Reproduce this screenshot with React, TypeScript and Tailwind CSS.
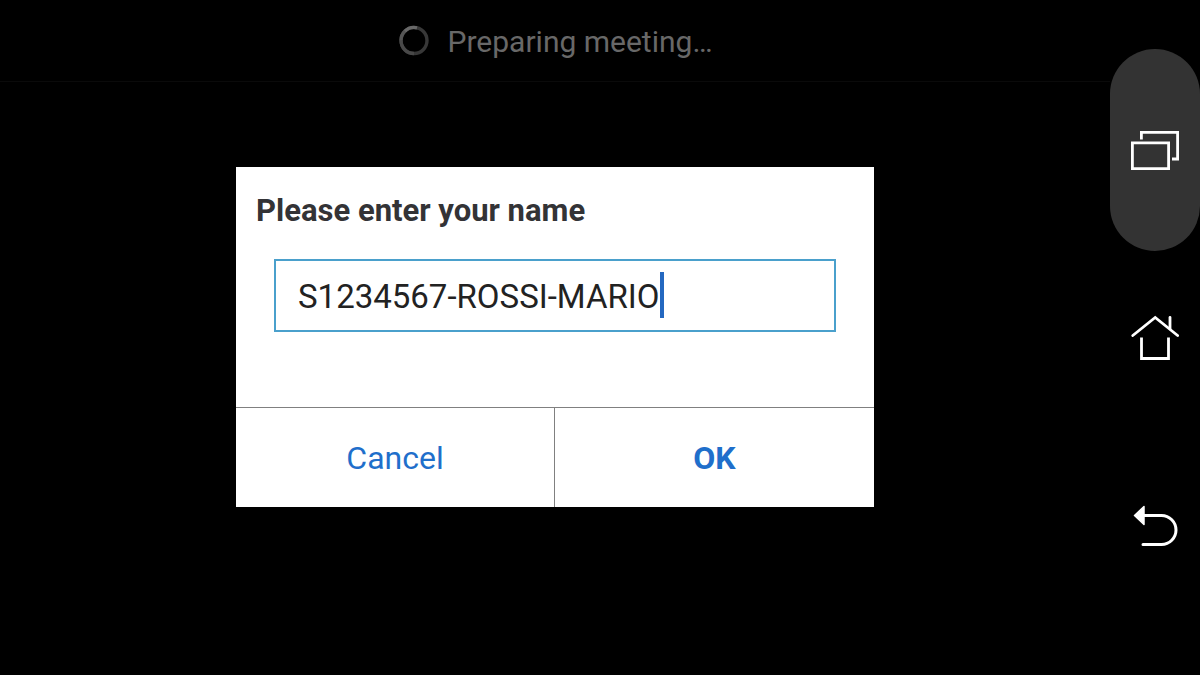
import { useState } from 'react'

function Spinner() {
  return (
    <svg className="h-8 w-8" viewBox="0 0 32 32" fill="none" strokeWidth="3.4">
      <circle cx="16" cy="15.5" r="13" stroke="#383838" />
      <path d="M3 15.5A13 13 0 0 0 16 28.5" stroke="#484848" />
      <path d="M3 15.5A13 13 0 0 1 6.8 6.3" stroke="#555555" />
      <path d="M6.8 6.3A13 13 0 0 1 19 2.8" stroke="#686868" />
    </svg>
  )
}

function RecentsIcon() {
  return (
    <svg className="h-12 w-12" viewBox="0 0 48 48" fill="none" stroke="#fff" strokeWidth="2.8">
      <path d="M1.4 15.9H37.6V41.6H1.4Z" />
      <path d="M10.4 12.5V5.4H46.6V32H41" />
    </svg>
  )
}

function HomeIcon() {
  return (
    <svg className="h-12 w-12" viewBox="0 0 48 48" fill="none" stroke="#fff" strokeWidth="2.8" strokeLinecap="round">
      <path d="M1.8 20.5L24.2 2.5L46.6 20.5" />
      <path d="M39 2.5V13.5" />
      <path d="M10.5 22.5V43.5H37.5V22.5" strokeLinecap="butt" />
    </svg>
  )
}

function BackIcon() {
  return (
    <svg className="h-12 w-12" viewBox="0 0 48 48" fill="none" stroke="#fff" strokeWidth="3" strokeLinecap="round">
      <path d="M12 12.5H30.5A14.5 14.5 0 0 1 30.5 41.5H12" />
      <path d="M3.5 12.5L13 3.5V21.5Z" fill="#fff" strokeWidth="1.5" strokeLinejoin="round" />
    </svg>
  )
}

export default function App() {
  const [name, setName] = useState('S1234567-ROSSI-MARIO')

  return (
    <div className="flex h-screen bg-black font-['Roboto',sans-serif]">
      <main className="relative min-w-0 flex-1">
        <header className="flex h-[82px] items-center justify-center gap-[18px] border-b border-[#0a0a0a] text-[30px] text-[#686868]">
          <Spinner />
          <span className="pt-0.5">Preparing meeting…</span>
        </header>

        {/* Modal */}
        <div className="absolute inset-0 flex items-center justify-center pb-0.5">
          <form
            role="dialog"
            aria-labelledby="dialog-title"
            className="w-full max-w-[638px] bg-white"
            onSubmit={e => e.preventDefault()}
          >
            <label id="dialog-title" htmlFor="name" className="block px-5 pt-6 text-[31px] leading-10 font-bold text-[#333336]">
              Please enter your name
            </label>
            <div className="mx-[38px] mt-7 mb-[75px] flex h-[73px] items-center border-2 border-[#4aa0cc] px-[22px]">
              <input
                id="name"
                type="text"
                autoComplete="off"
                spellCheck={false}
                value={name}
                onChange={e => setName(e.target.value)}
                className="field-sizing-content max-w-full pt-1 text-[33px] text-[#222222] caret-transparent outline-none"
              />
              <span className="h-[46px] w-1 shrink-0 bg-[#2468c0]" />
            </div>
            <div className="grid grid-cols-2 border-t border-[#808080] text-[32px] text-[#1f6fcb]">
              <button type="button" className="h-[99px] border-r border-[#808080] pt-0.5">
                Cancel
              </button>
              <button type="submit" className="h-[99px] pt-0.5 font-bold">
                OK
              </button>
            </div>
          </form>
        </div>
      </main>

      <nav className="flex w-[90px] flex-col justify-center">
        <button aria-label="Recent apps" className="flex h-[202px] items-center justify-center rounded-full bg-[#333333] pt-0.5">
          <RecentsIcon />
        </button>
        <button aria-label="Home" className="flex h-[174px] items-center justify-center pt-0.5">
          <HomeIcon />
        </button>
        <button aria-label="Back" className="flex h-[202px] items-center justify-center pt-0.5">
          <BackIcon />
        </button>
      </nav>
    </div>
  )
}
